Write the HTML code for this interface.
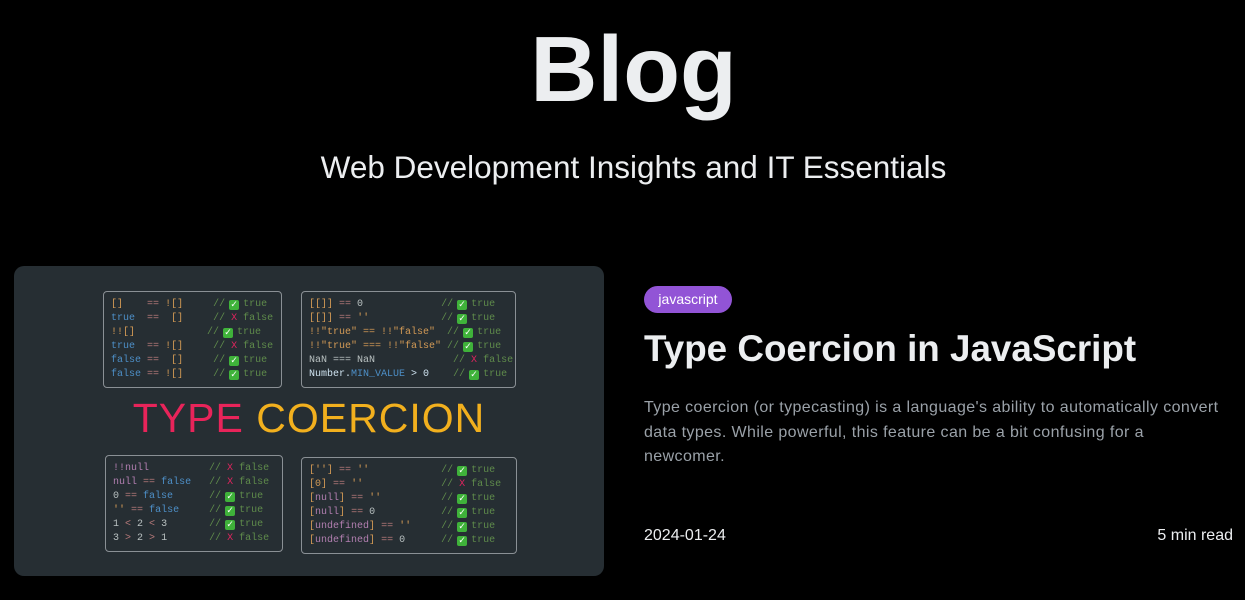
<!DOCTYPE html>
<html><head><meta charset="utf-8"><style>
*{margin:0;padding:0;box-sizing:border-box}
body{width:1245px;height:600px;background:#000;color:#eceef0;font-family:"Liberation Sans",sans-serif;position:relative;overflow:hidden}
h1{position:absolute;left:0;width:1267px;text-align:center;top:14px;font-size:93px;font-weight:bold;color:#eceef0;line-height:110px}
.sub{position:absolute;left:0;width:1267px;text-align:center;top:149px;font-size:31.5px;color:#eceef0}
.card{position:absolute;left:14px;top:266px;width:590px;height:310px;background:#262e33;border-radius:10px}
.box{position:absolute;border:1px solid #8a9095;border-radius:4px;font-family:"Liberation Mono",monospace;font-size:10px;line-height:14px;color:#b8c0c0;padding:6px 0 0 7px;white-space:pre;overflow:hidden}
.o{color:#d39a55}.b{color:#4d8fc7}.c{color:#5f8b4b}.x{color:#e0245e}.p{color:#b27fb0}.g{color:#b87a7a}
.ck{display:inline-block;width:10px;height:10px;margin:0 -2px;background:#3fb23a;border-radius:2px;color:#fff;font-size:9px;line-height:10px;text-align:center;vertical-align:-1px}
.tc{position:absolute;top:128px;left:0;width:590px;text-align:center;font-family:"Liberation Sans",sans-serif;font-size:41px;letter-spacing:1px;line-height:48px}
.tag{position:absolute;left:644px;top:286px;width:88px;height:27px;border-radius:14px;background:#9254d6;color:#fff;font-size:14px;text-align:center;line-height:27px}
h2{position:absolute;left:644px;top:328px;font-size:36.8px;font-weight:bold;color:#eceef0;white-space:nowrap}
.desc{position:absolute;left:644px;top:396px;width:600px;font-size:16px;letter-spacing:0.4px;line-height:24.5px;color:#9aa1a8;white-space:nowrap}
.date{position:absolute;left:644px;top:527px;font-size:16px;color:#eceef0}
.read{position:absolute;right:12px;top:527px;font-size:16px;color:#eceef0}
</style></head><body>
<h1>Blog</h1>
<div class="sub">Web Development Insights and IT Essentials</div>
<div class="card">
<div class="box" style="left:89px;top:25px;width:179px;height:97px"><span class="o">[]</span>    <span class="g">==</span> <span class="o">![]</span>     <span class="c">// <span class="ck">✓</span> true</span>
<span class="b">true</span>  <span class="g">==</span>  <span class="o">[]</span>     <span class="c">// <span class="x">X</span> false</span>
<span class="o">!![]</span>            <span class="c">// <span class="ck">✓</span> true</span>
<span class="b">true</span>  <span class="g">==</span> <span class="o">![]</span>     <span class="c">// <span class="x">X</span> false</span>
<span class="b">false</span> <span class="g">==</span>  <span class="o">[]</span>     <span class="c">// <span class="ck">✓</span> true</span>
<span class="b">false</span> <span class="g">==</span> <span class="o">![]</span>     <span class="c">// <span class="ck">✓</span> true</span></div>
<div class="box" style="left:287px;top:25px;width:215px;height:97px"><span class="o">[[]]</span> <span class="g">==</span> 0             <span class="c">// <span class="ck">✓</span> true</span>
<span class="o">[[]]</span> <span class="g">==</span> <span class="o">''</span>            <span class="c">// <span class="ck">✓</span> true</span>
<span class="o">!!"true" == !!"false"</span>  <span class="c">// <span class="ck">✓</span> true</span>
<span class="o">!!"true" === !!"false"</span> <span class="c">// <span class="ck">✓</span> true</span>
NaN === NaN             <span class="c">// <span class="x">X</span> false</span>
<span style="color:#cfe3f0">Number.<span class="b">MIN_VALUE</span> > 0</span>    <span class="c">// <span class="ck">✓</span> true</span></div>
<div class="tc"><span style="color:#e8245a">TYPE</span> <span style="color:#f2b01e">COERCION</span></div>
<div class="box" style="left:91px;top:189px;width:178px;height:97px"><span class="p">!!null</span>          <span class="c">// <span class="x">X</span> false</span>
<span class="p">null</span> <span class="g">==</span> <span class="b">false</span>   <span class="c">// <span class="x">X</span> false</span>
0 <span class="g">==</span> <span class="b">false</span>      <span class="c">// <span class="ck">✓</span> true</span>
<span class="o">''</span> <span class="g">==</span> <span class="b">false</span>     <span class="c">// <span class="ck">✓</span> true</span>
1 <span class="g">&lt;</span> 2 <span class="g">&lt;</span> 3       <span class="c">// <span class="ck">✓</span> true</span>
3 <span class="g">&gt;</span> 2 <span class="g">&gt;</span> 1       <span class="c">// <span class="x">X</span> false</span></div>
<div class="box" style="left:287px;top:191px;width:216px;height:97px"><span class="o">['']</span> <span class="g">==</span> <span class="o">''</span>            <span class="c">// <span class="ck">✓</span> true</span>
<span class="o">[0]</span> <span class="g">==</span> <span class="o">''</span>             <span class="c">// <span class="x">X</span> false</span>
<span class="o">[<span class="p">null</span>]</span> <span class="g">==</span> <span class="o">''</span>          <span class="c">// <span class="ck">✓</span> true</span>
<span class="o">[<span class="p">null</span>]</span> <span class="g">==</span> 0           <span class="c">// <span class="ck">✓</span> true</span>
<span class="o">[<span class="p">undefined</span>]</span> <span class="g">==</span> <span class="o">''</span>     <span class="c">// <span class="ck">✓</span> true</span>
<span class="o">[<span class="p">undefined</span>]</span> <span class="g">==</span> 0      <span class="c">// <span class="ck">✓</span> true</span></div>
</div>
<div class="tag">javascript</div>
<h2>Type Coercion in JavaScript</h2>
<div class="desc">Type coercion (or typecasting) is a language's ability to automatically convert<br>data types. While powerful, this feature can be a bit confusing for a<br>newcomer.</div>
<div class="date">2024-01-24</div>
<div class="read">5 min read</div>
</body></html>
